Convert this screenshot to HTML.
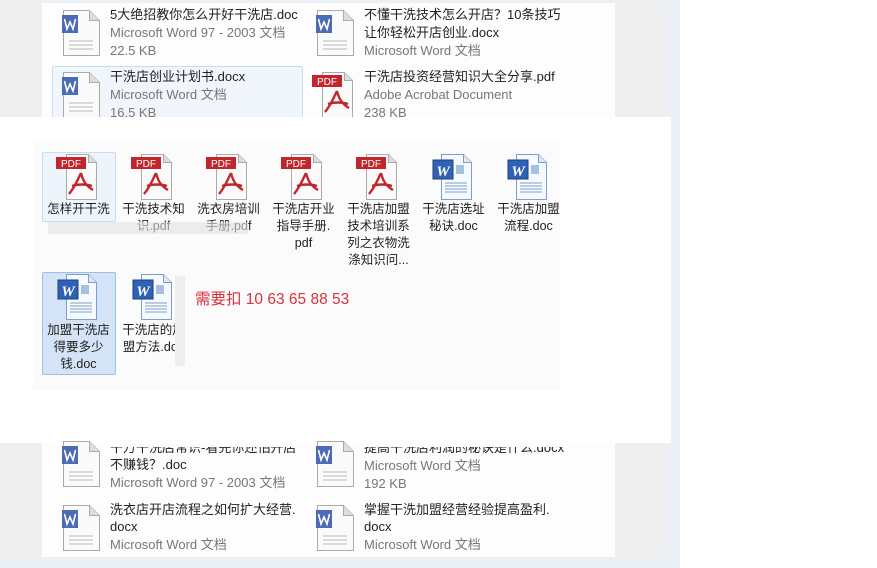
<!DOCTYPE html>
<html><head><meta charset="utf-8"><style>
*{margin:0;padding:0;box-sizing:border-box}
body{width:877px;height:568px;position:relative;overflow:hidden;background:#fff;font-family:"Liberation Sans","Noto Sans CJK SC",sans-serif;}
.a{position:absolute}
.t{position:absolute;font-size:13px;line-height:17px;color:#222;white-space:nowrap}
.g{color:#777}
.c{position:absolute;font-size:12.5px;line-height:17px;color:#222;text-align:center;width:75px}
</style></head><body>
<div class="a" style="left:0;top:0;width:680px;height:568px;background:#ebf0f7"></div>
<div class="a" style="left:0;top:3px;width:668px;height:554px;background:#efefef"></div>
<div class="a" style="left:42px;top:3px;width:573px;height:114px;background:#fdfdfd"></div>
<div class="a" style="left:42px;top:443px;width:573px;height:114px;background:#fdfdfd"></div>
<div class="a" style="left:52px;top:66px;width:251px;height:53px;background:#f1f6fc;border:1px solid #c9dcf0;border-radius:2px"></div>

<svg width="0" height="0" style="position:absolute"><defs>
<g id="w"><path d="M1.5 0.5h26l10 10v35h-36z" fill="#fafafa" stroke="#aaa"/><path d="M27.5 0.5v10h10" fill="#ddd" stroke="#aaa"/><rect x="-1" y="5" width="17" height="18" fill="#4a6bb5"/><path d="M2.5 9l2.5 10 3-7 3 7 2.5-10" stroke="#fff" stroke-width="1.6" fill="none"/><path d="M7 31h24M7 35h24M7 39h24" stroke="#bbb"/></g>
<g id="p"><path d="M10.5 0.5h22l8 8v37h-30z" fill="#fafafa" stroke="#aaa"/><path d="M32.5 0.5v8h8" fill="#ddd" stroke="#aaa"/><rect x="0" y="3" width="30" height="12" fill="#c0262b"/><text x="15" y="13" font-size="10" fill="#fff" text-anchor="middle" font-family="Liberation Sans">PDF</text><path d="M25 19c-4 8-6 14-12 21M25 19c2 8 5 13 12 17M16 32c6-2 14-2 20 0" stroke="#c0262b" stroke-width="2.4" fill="none"/></g>
<g id="d"><path d="M10.5 0.5h22l8 8v37h-30z" fill="#f6f9fd" stroke="#7b9fcc"/><path d="M32.5 0.5v8h8" fill="#dde8f5" stroke="#7b9fcc"/><rect x="2" y="6" width="20" height="19" fill="#2f62b5" stroke="#1d3f80"/><text x="12" y="22" font-size="15" font-style="italic" font-weight="bold" fill="#fff" text-anchor="middle" font-family="Liberation Serif">W</text><rect x="25" y="11" width="8" height="9" fill="#a8c0e0"/><path d="M14 29h22M14 32h22M14 35h22M14 38h22" stroke="#7b9fcc"/></g>
</defs></svg>

<svg class="a" style="left:62px;top:10px" width="40" height="48"><use href="#w"/></svg>
<div class="t" style="left:110px;top:6px">5大绝招教你怎么开好干洗店.doc</div>
<div class="t g" style="left:110px;top:24px">Microsoft Word 97 - 2003 文档</div>
<div class="t g" style="left:110px;top:42px">22.5 KB</div>
<svg class="a" style="left:316px;top:10px" width="40" height="48"><use href="#w"/></svg>
<div class="t" style="left:364px;top:6px">不懂干洗技术怎么开店？10条技巧</div>
<div class="t" style="left:364px;top:24px">让你轻松开店创业.docx</div>
<div class="t g" style="left:364px;top:42px">Microsoft Word 文档</div>
<svg class="a" style="left:62px;top:72px" width="40" height="48"><use href="#w"/></svg>
<div class="t" style="left:110px;top:68px">干洗店创业计划书.docx</div>
<div class="t g" style="left:110px;top:86px">Microsoft Word 文档</div>
<div class="t g" style="left:110px;top:104px">16.5 KB</div>
<svg class="a" style="left:312px;top:72px" width="44" height="48"><use href="#p"/></svg>
<div class="t" style="left:364px;top:68px">干洗店投资经营知识大全分享.pdf</div>
<div class="t g" style="left:364px;top:86px">Adobe Acrobat Document</div>
<div class="t g" style="left:364px;top:104px">238 KB</div>

<div class="a" style="left:0;top:117px;width:671px;height:326px;background:#fff"></div>
<div class="a" style="left:33px;top:140px;width:527px;height:250px;background:#fbfbfc"></div>
<div class="a" style="left:42px;top:152px;width:74px;height:70px;background:#eef4fb;border:1px solid #c9dcf0;border-radius:2px"></div>
<div class="a" style="left:42px;top:272px;width:74px;height:103px;background:#d4e4f6;border:1px solid #9dc0e6;border-radius:2px"></div>

<svg class="a" style="left:56px;top:154px" width="44" height="48"><use href="#p"/></svg>
<svg class="a" style="left:131px;top:154px" width="44" height="48"><use href="#p"/></svg>
<svg class="a" style="left:206px;top:154px" width="44" height="48"><use href="#p"/></svg>
<svg class="a" style="left:281px;top:154px" width="44" height="48"><use href="#p"/></svg>
<svg class="a" style="left:356px;top:154px" width="44" height="48"><use href="#p"/></svg>
<svg class="a" style="left:431px;top:154px" width="44" height="48"><use href="#d"/></svg>
<svg class="a" style="left:506px;top:154px" width="44" height="48"><use href="#d"/></svg>
<div class="c" style="left:41px;top:201px">怎样开干洗</div>
<div class="c" style="left:116px;top:201px">干洗技术知<br>识.pdf</div>
<div class="c" style="left:191px;top:201px">洗衣房培训<br>手册.pdf</div>
<div class="c" style="left:266px;top:201px">干洗店开业<br>指导手册.<br>pdf</div>
<div class="c" style="left:341px;top:201px">干洗店加盟<br>技术培训系<br>列之衣物洗<br>涤知识问...</div>
<div class="c" style="left:416px;top:201px">干洗店选址<br>秘诀.doc</div>
<div class="c" style="left:491px;top:201px">干洗店加盟<br>流程.doc</div>
<div class="a" style="left:48px;top:222px;width:200px;height:12px;background:#e2e2e6;opacity:.6"></div>
<svg class="a" style="left:56px;top:274px" width="44" height="48"><use href="#d"/></svg>
<svg class="a" style="left:131px;top:274px" width="44" height="48"><use href="#d"/></svg>
<div class="c" style="left:41px;top:322px">加盟干洗店<br>得要多少<br>钱.doc</div>
<div class="c" style="left:116px;top:322px">干洗店的加<br>盟方法.doc</div>
<div class="a" style="left:175px;top:276px;width:10px;height:90px;background:#eee"></div>
<div class="a" style="left:195px;top:287px;font-size:15.5px;color:#d8323a;white-space:nowrap">需要扣 10 63 65 88 53</div>

<svg class="a" style="left:62px;top:441px" width="40" height="48"><use href="#w"/></svg>
<div class="t" style="left:110px;top:439px;clip-path:inset(8px 0 0 0)">干万干洗店常识-看完你还怕开店</div>
<div class="t" style="left:110px;top:456px">不赚钱？.doc</div>
<div class="t g" style="left:110px;top:474px">Microsoft Word 97 - 2003 文档</div>
<svg class="a" style="left:316px;top:441px" width="40" height="48"><use href="#w"/></svg>
<div class="t" style="left:364px;top:439px;clip-path:inset(8px 0 0 0)">提高干洗店利润的秘诀是什么.docx</div>
<div class="t g" style="left:364px;top:457px">Microsoft Word 文档</div>
<div class="t g" style="left:364px;top:475px">192 KB</div>
<svg class="a" style="left:62px;top:505px" width="40" height="48"><use href="#w"/></svg>
<div class="t" style="left:110px;top:501px">洗衣店开店流程之如何扩大经营.</div>
<div class="t" style="left:110px;top:518px">docx</div>
<div class="t g" style="left:110px;top:536px">Microsoft Word 文档</div>
<svg class="a" style="left:316px;top:505px" width="40" height="48"><use href="#w"/></svg>
<div class="t" style="left:364px;top:501px">掌握干洗加盟经营经验提高盈利.</div>
<div class="t" style="left:364px;top:518px">docx</div>
<div class="t g" style="left:364px;top:536px">Microsoft Word 文档</div>
</body></html>
